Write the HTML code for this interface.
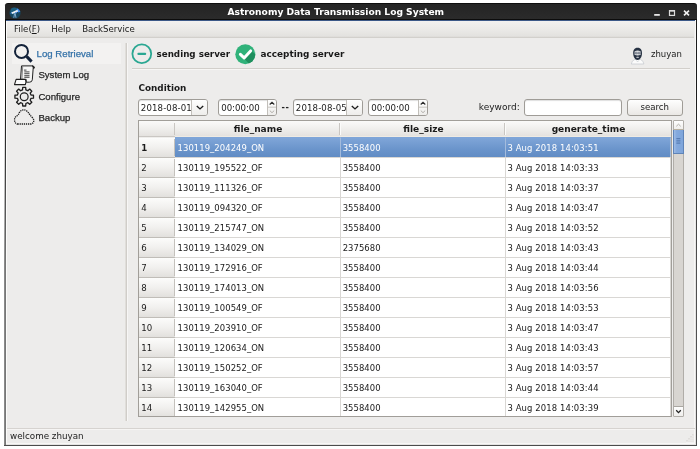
<!DOCTYPE html>
<html>
<head>
<meta charset="utf-8">
<title>Astronomy Data Transmission Log System</title>
<style>
*{box-sizing:border-box;margin:0;padding:0}
html,body{width:700px;height:449px;overflow:hidden;background:#fff}
body{will-change:transform;font-family:"DejaVu Sans","Liberation Sans",sans-serif;font-size:8.5px;color:#1a1a1a;position:relative}
.abs{position:absolute;white-space:nowrap}
#win{position:absolute;left:4px;top:3px;width:693px;height:443px;background:#edeceb;border-top-left-radius:4px;border-top-right-radius:4px}
#bl{position:absolute;left:4px;top:6px;width:3px;height:439px}
#bl i,#br i{position:absolute;top:0;width:1px;height:439px}
#bl i:nth-child(3),#br i:nth-child(1){height:437px}
#br i:nth-child(2){height:438px}
#bl i:nth-child(1){left:0;background:linear-gradient(#fff 0,#fff 90px,#8a8a8a 260px)}
#bl i:nth-child(2){left:1px;background:linear-gradient(#141414 0,#141414 90px,#777 260px)}
#bl i:nth-child(3){left:2px;background:#fbfbfa}
#br{position:absolute;left:694px;top:6px;width:3px;height:439px}
#br i:nth-child(1){left:0;background:linear-gradient(#edeceb 0,#edeceb 90px,#f8f7f6 260px)}
#br i:nth-child(2){left:1px;background:linear-gradient(#f8f7f6 0,#f8f7f6 90px,#e4e3e2 260px)}
#br i:nth-child(3){left:2px;background:linear-gradient(#1c1c1c 0,#1c1c1c 90px,#505050 260px)}
#bb{position:absolute;left:4px;top:443px;width:693px;height:3px;background:linear-gradient(#f8f7f6 0,#f8f7f6 1px,#e4e3e2 1px,#e4e3e2 2px,#4c4c4c 2px)}
#title{position:absolute;left:5px;top:3px;width:692px;height:17px;background:linear-gradient(#242424,#2b2b2b);border-top:1px solid #0e0e0e;border-bottom:1px solid #0c0c0c;border-top-left-radius:3px;border-top-right-radius:3px}
#title .t{position:absolute;left:222.5px;top:2.6px;white-space:nowrap;color:#fff;font-weight:bold;font-size:9.15px;line-height:11px}
#blue{position:absolute;left:6px;top:19.5px;width:689px;height:1px;background:#3c5988}
#menubar{position:absolute;left:7px;top:20.5px;width:687px;height:17px;background:linear-gradient(#f2f1f0,#ebeae8 50%,#e3e2df 94%,#dbd9d6);border-bottom:1px solid #d2d0cc}
#menubar span{position:absolute;top:3px;line-height:11px;font-size:8.6px}
/* sidebar */
.nav{position:absolute;left:12px;width:109px;height:21px}
.nav.on{background:#f3f2f1}
.nav span{position:absolute;left:26.4px;top:5px;line-height:11px;font-family:"Liberation Sans","DejaVu Sans",sans-serif;font-size:9.6px;color:#262626;-webkit-text-stroke:.25px #262626}
.nav.on span{color:#3472a8;-webkit-text-stroke:.25px #3472a8;left:24.6px;font-size:9.65px}
.nav svg{position:absolute;left:0;top:0}
#vsep{position:absolute;left:125px;top:43px;width:3px;height:378px;background:linear-gradient(90deg,#e0deda 0,#e0deda 1px,#d0cdc9 1px,#d0cdc9 2px,#f7f6f5 2px)}
#hsep{position:absolute;left:132px;top:68px;width:558px;height:2px;background:linear-gradient(#d2cfcb 50%,#f7f6f5 50%)}
.b{font-weight:bold}
/* inputs */
.box{position:absolute;top:99px;height:16.5px;background:#fff;border:1px solid #9f9c97;border-radius:3px;box-shadow:inset 0 1px 1px rgba(0,0,0,.13)}
.box .v{position:absolute;left:2.2px;top:2.9px;line-height:11px;font-size:8.6px;white-space:nowrap}
.box .dd{position:absolute;right:0;top:0;bottom:0;width:16px;border-left:1px solid #c2bfba;background:linear-gradient(#fefefe,#eeedeb);border-radius:0 2px 2px 0}
.box .dd svg,.box .sp svg{position:absolute;left:0;top:0}
.box .sp{position:absolute;right:0;top:0;bottom:0;width:9px;border-left:1px solid #c2bfba;background:linear-gradient(#fefefe,#eeedeb);border-radius:0 2px 2px 0}
.btn{position:absolute;left:627px;top:99px;width:55.5px;height:16.5px;border:1px solid #9f9c97;border-radius:3px;background:linear-gradient(#fefefe,#eae8e5);text-align:center;line-height:15px;font-size:8.6px}
/* table */
#tbl{position:absolute;left:138px;top:120px;width:534px;height:297px;border:1px solid #a19e99;background:#fff;overflow:hidden}
table{border-collapse:separate;border-spacing:0;table-layout:fixed;width:532px;font-size:8.45px}
thead th{height:16px;background:linear-gradient(#fafaf9,#f1f0ee 45%,#e4e2df);border-bottom:1px solid #efebe3;font-weight:bold;text-align:center;font-size:9.05px;position:relative;padding-top:1px}
thead th:after{content:"";position:absolute;right:0;top:2px;bottom:1px;width:2px;background:linear-gradient(90deg,#c9c6c2 50%,#fbfbfa 50%)}
thead th:first-child:after{right:0;width:1px;background:#c9c6c2}
thead th:last-child:after{display:none}
tbody th{height:20px;background:linear-gradient(#fcfcfb,#f1f0ee 50%,#e2e0dd);border-top:1px solid #c0bdb8;position:relative;font-weight:normal;text-align:left;padding:1px 0 0 2.2px;font-size:8.6px}
tbody td{letter-spacing:.05px;height:20px;border-top:1px solid #d9d7d4;border-right:1px solid #d9d7d4;padding:0 0 0 2.6px;white-space:nowrap;overflow:hidden}
tbody th:after{content:"";position:absolute;right:0;top:1px;bottom:1px;width:1px;background:#c4c1bc}
tbody tr:first-child th{border-top-color:#efeeec}
thead th:first-child{border-bottom-color:#cac7c3}
tbody td+td{padding-left:1.7px}
tbody td+td+td{padding-left:1.5px;letter-spacing:.1px}
tr.sel td{background:linear-gradient(#7fa5d8,#6a94cb 60%,#618cc4);color:#fff;border-right-color:#a3bbdc;border-top-color:#7fa5d8}
tr.sel th{font-weight:bold}
/* scrollbar */
#sb{position:absolute;left:673px;top:120px;width:11px;height:297px;background:#d8d5d1;border:1px solid #b0ada8;border-radius:1px}
#sb .up,#sb .dn{position:absolute;left:0;width:9px;height:9px;background:linear-gradient(#fefefe,#efeeec)}
#sb .up{top:0;border-bottom:1px solid #b9b1a0}
#sb .dn{bottom:0;border-top:1px solid #a9a6a1;height:10px}
#sb .th{position:absolute;left:-1px;top:9px;width:11px;height:24px;background:linear-gradient(90deg,#9dbbe5,#84a9dd 30%,#7ea5db);border:1px solid #5f84b8;border-top:none}
#sb svg{position:absolute;left:0;top:0}
#status{position:absolute;left:7px;top:428px;width:688px;height:1px;background:#d6d3d0}
#status2{position:absolute;left:7px;top:429px;width:687px;height:1px;background:#f6f5f4}
</style>
</head>
<body>
<div id="win"></div>
<div id="bb"></div><div id="bl"><i></i><i></i><i></i></div><div id="br"><i></i><i></i><i></i></div>
<div id="title"><div class="t">Astronomy Data Transmission Log System</div></div>
<div id="blue"></div>
<svg class="abs" style="left:9px;top:7px" width="12" height="12" viewBox="0 0 12 12"><circle cx="6" cy="6" r="5.6" fill="#16475f"/><circle cx="5" cy="4" r="3.4" fill="#1f6a8c" opacity=".7"/><path d="M8 1.2 A5.5 5.5 0 0 1 11.3 4.8 L9.4 5.6 L7.6 2.6 Z" fill="#3f88ea"/><path d="M1.2 6.4 L2.6 5 L3 6.6 Z" fill="#3f88ea"/><path d="M2.4 5.6 L8.4 2.8 L9.2 4.4 L3.2 7 Z" fill="#eef3f8"/><path d="M6.2 5.6 L7.8 4.8 L8.2 5.8 L6.6 6.4 Z" fill="#5b93ee"/><path d="M5.6 6.4 L4.8 10.8 M6.2 6.4 L7 10.8" stroke="#9cc0ea" stroke-width=".8" fill="none"/></svg>
<svg class="abs" style="left:650px;top:6px" width="44" height="13" viewBox="650 6 44 13"><rect x="654.2" y="14" width="5.6" height="1.8" fill="#e6e6e6"/><rect x="669.5" y="10.6" width="5" height="4.8" fill="none" stroke="#dcdcdc" stroke-width="1.2"/><rect x="669" y="10" width="6" height="1.6" fill="#dcdcdc"/><path d="M684 10.6 L689 15.4 M689 10.6 L684 15.4" stroke="#f0f0f0" stroke-width="1.6" fill="none"/></svg>
<div id="menubar"><span style="left:7px">File(<u>F</u>)</span><span style="left:44.3px">Help</span><span style="left:75.2px">BackService</span></div>
<!-- sidebar -->
<div class="nav on" style="top:43px"><span>Log Retrieval</span></div>
<div class="nav" style="top:64px"><span>System Log</span></div>
<div class="nav" style="top:86px"><span>Configure</span></div>
<div class="nav" style="top:107px"><span>Backup</span></div>
<!-- sidebar icons -->
<svg class="abs" style="left:10px;top:40px" width="30" height="26" viewBox="10 40 30 26"><circle cx="21.5" cy="51.4" r="6.5" fill="none" stroke="#13223a" stroke-width="2"/><path d="M26.6 56.4 L31.6 61.6" stroke="#13223a" stroke-width="3" fill="none"/></svg>
<svg class="abs" style="left:10px;top:62px" width="30" height="26" viewBox="10 62 30 26"><g fill="none" stroke="#202020" stroke-width="1" stroke-linejoin="round"><path d="M21.5 65.9 L32.4 65.9 Q34.4 66 34.2 68.1 L33.2 68.1 L32.3 79.8 Q32.1 82.2 29.4 82.2 L26.2 82.2 L26.2 79.4 L20.5 79.4 Z" fill="#f6f6f5"/><path d="M22.7 66.4 L21.9 79" stroke="#555" stroke-width=".7"/><path d="M32.2 66 Q33.5 66.5 33.2 68.1 L34.2 68.1 Q34.4 66 32.4 65.9 Z" fill="#202020"/><path d="M16.1 79.4 L25.4 79.4 Q26.6 82 25.4 84.6 L14.5 84.6 Z" fill="#fcfcfc" stroke-width="1.1"/></g><g stroke="#6a6a6a" stroke-width="1.25"><path d="M23.9 70h2.6M24.3 71.9h5.2M24.3 73.7h5.2M24.3 75.5h5.2M24.3 77.3h5.2"/></g></svg>
<svg class="abs" style="left:10px;top:84px" width="30" height="26" viewBox="-14.2 -12.7 30 26"><path d="M-1.66 -6.80 L-1.50 -9.28 L1.50 -9.28 L1.66 -6.80 L3.63 -5.98 L5.50 -7.62 L7.62 -5.50 L5.98 -3.63 L6.80 -1.66 L9.28 -1.50 L9.28 1.50 L6.80 1.66 L5.98 3.63 L7.62 5.50 L5.50 7.62 L3.63 5.98 L1.66 6.80 L1.50 9.28 L-1.50 9.28 L-1.66 6.80 L-3.63 5.98 L-5.50 7.62 L-7.62 5.50 L-5.98 3.63 L-6.80 1.66 L-9.28 1.50 L-9.28 -1.50 L-6.80 -1.66 L-5.98 -3.63 L-7.62 -5.50 L-5.50 -7.62 L-3.63 -5.98Z" fill="none" stroke="#1e1e1e" stroke-width="1.3" stroke-linejoin="round"/><circle cx="0" cy="0" r="3.9" fill="none" stroke="#1e1e1e" stroke-width="1.2"/></svg>
<svg class="abs" style="left:10px;top:105px" width="30" height="26" viewBox="10 105 30 26"><path d="M17.5 124 L30.5 124 Q33.8 123.6 33.8 120.4 Q33.6 118.6 31.6 117 L27.6 111.6 Q25.6 109.8 23.4 109.9 Q20.6 110.2 19.2 112.8 L18 115.4 Q14.6 116.6 14.5 120 Q14.8 123.6 17.5 124 Z" fill="none" stroke="#1c1c1c" stroke-width="1.3" stroke-dasharray="1.25 .85"/></svg>
<div id="vsep"></div>

<!-- toolbar -->
<svg class="abs" style="left:131px;top:43.4px" width="22" height="22" viewBox="0 0 22 22"><circle cx="10.8" cy="10.8" r="9.4" fill="none" stroke="#2aa792" stroke-width="1.8"/><rect x="6.4" y="9.8" width="8.8" height="2.1" rx="1" fill="#2aa792"/></svg>
<div class="abs b" style="left:156.5px;top:48.8px;line-height:11px;font-size:8.75px">sending server</div>
<svg class="abs" style="left:235px;top:44px" width="21" height="21" viewBox="0 0 21 21"><defs><clipPath id="cc"><circle cx="10.3" cy="10.2" r="10"/></clipPath></defs><circle cx="10.3" cy="10.2" r="10" fill="#30b27a"/><path d="M9.2 14.4 L16.4 6.8 L22 12 L22 22 L16 22 Z" fill="#1f8f5e" clip-path="url(#cc)"/><path d="M5.4 10.4 L9.1 13.9 L15.6 6.9" fill="none" stroke="#fff" stroke-width="3" stroke-linecap="round" stroke-linejoin="round"/></svg>
<div class="abs b" style="left:260.5px;top:48.9px;line-height:11px;font-size:8.9px">accepting server</div>
<div class="abs" style="left:651px;top:48.5px;line-height:11px;font-size:8.5px">zhuyan</div>
<svg class="abs" style="left:630px;top:46px" width="16" height="20" viewBox="630 46 16 20"><path d="M631.3 64 Q631.5 60.8 634.8 59.4 L640.4 59.4 Q643.7 60.8 643.9 64 Z" fill="#fbfbfb" stroke="#c3c7cd" stroke-width=".7"/><path d="M637.6 47.7 C641 47.7 642.1 50.2 642 53.4 C641.9 57 640 59.9 637.6 59.9 C635.2 59.9 633.3 57 633.2 53.4 C633.1 50.2 634.2 47.7 637.6 47.7 Z" fill="#273243"/><path d="M634.5 51.6 Q637.6 49.6 640.7 51.6 L640.7 54.8 Q637.6 56.2 634.5 54.8 Z" fill="#dcdee1"/><path d="M634.2 53.1 h6.8" stroke="#596273" stroke-width=".7"/><circle cx="636.1" cy="53.1" r="1" fill="none" stroke="#596273" stroke-width=".5"/><circle cx="639.1" cy="53.1" r="1" fill="none" stroke="#596273" stroke-width=".5"/><rect x="636.3" y="56.7" width="2.6" height="1" rx=".5" fill="#e3e4e7"/><path d="M636.4 60.4 L637.6 62 L638.8 60.4" fill="none" stroke="#c3c7cd" stroke-width=".6"/></svg>
<div id="hsep"></div>

<div class="abs b" style="left:138.5px;top:83.2px;line-height:11px;font-size:8.85px">Condition</div>
<div class="box" style="left:138px;width:70px"><span class="v" style="left:1.8px;letter-spacing:.12px">2018-08-01</span><span class="dd"><svg width="16" height="15" viewBox="0 0 16 15"><path d="M4.8 5.9 L8 8.9 L11.2 5.9" fill="none" stroke="#1c1c1c" stroke-width="1.4"/></svg></span></div>
<div class="box" style="left:218px;width:59px"><span class="v">00:00:00</span><span class="sp"><svg width="8" height="15" viewBox="0 0 8 15"><path d="M1.7 4.5 L4 2.3 L6.3 4.5" fill="none" stroke="#2a2a2a" stroke-width="1.15"/><path d="M0 7.2 H8" stroke="#bcb9b4" stroke-width=".8"/><path d="M1.8 10.6 L4 12.7 L6.2 10.6" fill="none" stroke="#b3b0ab" stroke-width="1"/></svg></span></div>
<div class="abs b" style="left:281.6px;top:102px;line-height:11px;font-size:8.2px;letter-spacing:.5px;color:#222">--</div>
<div class="box" style="left:293px;width:70px"><span class="v" style="left:1.8px;letter-spacing:.12px">2018-08-05</span><span class="dd"><svg width="16" height="15" viewBox="0 0 16 15"><path d="M4.8 5.9 L8 8.9 L11.2 5.9" fill="none" stroke="#1c1c1c" stroke-width="1.4"/></svg></span></div>
<div class="box" style="left:368px;width:59.5px"><span class="v">00:00:00</span><span class="sp"><svg width="8" height="15" viewBox="0 0 8 15"><path d="M1.7 4.5 L4 2.3 L6.3 4.5" fill="none" stroke="#2a2a2a" stroke-width="1.15"/><path d="M0 7.2 H8" stroke="#bcb9b4" stroke-width=".8"/><path d="M1.8 10.6 L4 12.7 L6.2 10.6" fill="none" stroke="#b3b0ab" stroke-width="1"/></svg></span></div>
<div class="abs" style="left:478.8px;top:102.2px;line-height:11px;font-size:9px">keyword:</div>
<div class="box" style="left:524px;width:98px"></div>
<div class="btn">search</div>

<div id="tbl">
<table>
  <colgroup><col style="width:36px"><col style="width:166px"><col style="width:165px"><col style="width:165px"></colgroup>
  <thead><tr><th></th><th>file_name</th><th>file_size</th><th>generate_time</th></tr></thead>
  <tbody>
    <tr class="sel"><th>1</th><td>130119_204249_ON</td><td>3558400</td><td>3 Aug 2018 14:03:51</td></tr>
    <tr><th>2</th><td>130119_195522_OF</td><td>3558400</td><td>3 Aug 2018 14:03:33</td></tr>
    <tr><th>3</th><td>130119_111326_OF</td><td>3558400</td><td>3 Aug 2018 14:03:37</td></tr>
    <tr><th>4</th><td>130119_094320_OF</td><td>3558400</td><td>3 Aug 2018 14:03:47</td></tr>
    <tr><th>5</th><td>130119_215747_ON</td><td>3558400</td><td>3 Aug 2018 14:03:52</td></tr>
    <tr><th>6</th><td>130119_134029_ON</td><td>2375680</td><td>3 Aug 2018 14:03:43</td></tr>
    <tr><th>7</th><td>130119_172916_OF</td><td>3558400</td><td>3 Aug 2018 14:03:44</td></tr>
    <tr><th>8</th><td>130119_174013_ON</td><td>3558400</td><td>3 Aug 2018 14:03:56</td></tr>
    <tr><th>9</th><td>130119_100549_OF</td><td>3558400</td><td>3 Aug 2018 14:03:53</td></tr>
    <tr><th>10</th><td>130119_203910_OF</td><td>3558400</td><td>3 Aug 2018 14:03:47</td></tr>
    <tr><th>11</th><td>130119_120634_ON</td><td>3558400</td><td>3 Aug 2018 14:03:43</td></tr>
    <tr><th>12</th><td>130119_150252_OF</td><td>3558400</td><td>3 Aug 2018 14:03:57</td></tr>
    <tr><th>13</th><td>130119_163040_OF</td><td>3558400</td><td>3 Aug 2018 14:03:44</td></tr>
    <tr><th>14</th><td>130119_142955_ON</td><td>3558400</td><td>3 Aug 2018 14:03:39</td></tr>
  </tbody>
</table>
</div>
<div id="sb"><div class="up"><svg width="9" height="8" viewBox="0 0 9 8"><path d="M2.3 5.3 L4.5 3.2 L6.7 5.3" fill="none" stroke="#b0ada8" stroke-width="1"/></svg></div><div class="th"><svg width="9" height="23" viewBox="0 0 9 23"><path d="M2.4 8.7h4M2.4 10.9h4M2.4 13.1h4" stroke="#4a6ea6" stroke-width=".9"/></svg></div><div class="dn"><svg width="9" height="9" viewBox="0 0 9 9"><path d="M2.2 3.3 L4.5 5.6 L6.8 3.3" fill="none" stroke="#222" stroke-width="1.3"/></svg></div></div>
<div id="status"></div>
<div id="status2"></div>
<svg class="abs" style="left:683px;top:433px" width="12" height="12" viewBox="0 0 12 12"><g fill="#cdcac6"><rect x="9" y="1.6" width="1.6" height="1"/><rect x="7" y="3.6" width="3.6" height="1"/><rect x="5" y="5.6" width="5.6" height="1"/><rect x="3" y="7.6" width="7.6" height="1"/></g><g fill="#fbfbfa"><rect x="9" y="2.6" width="1.6" height=".8"/><rect x="7" y="4.6" width="3.6" height=".8"/><rect x="5" y="6.6" width="5.6" height=".8"/><rect x="3" y="8.6" width="7.6" height=".8"/></g></svg>
<div class="abs" style="left:10px;top:431.2px;line-height:11px;font-size:8.75px">welcome zhuyan</div>
</body>
</html>
